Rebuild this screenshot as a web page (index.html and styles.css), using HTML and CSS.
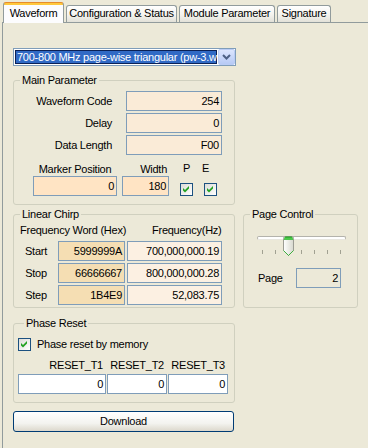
FILE: index.html
```html
<!DOCTYPE html>
<html lang="en">
<head>
    <meta charset="UTF-8">
    <title>Waveform</title>
    <link rel="stylesheet" href="styles.css">
</head>
<body>
    <!--标签页-->
    <div class="tabs">
        <div class="tab on" style="width:61px">Waveform</div>
        <div class="tab" style="width:111px">Configuration &amp; Status</div>
        <div class="tab" style="width:96px">Module Parameter</div>
        <div class="tab" style="width:54px">Signature</div>
    </div>
    <div class="panel">
        <!--波形选择-->
        <div class="combo">
            <span class="combo-text">700-800 MHz page-wise triangular (pw-3.w</span>
            <span class="combo-btn"><svg width="9" height="6" viewBox="0 0 9 6"><path d="M1 1l3.5 3.5L8 1" fill="none" stroke="#4D6185" stroke-width="2"/></svg></span>
        </div>
        <!--主参数-->
        <fieldset class="group main">
            <legend>Main Parameter</legend>
            <div class="row"><label>Waveform Code</label><span class="edit white-a w96">254</span></div>
            <div class="row"><label>Delay</label><span class="edit white-a w96">0</span></div>
            <div class="row"><label>Data Length</label><span class="edit white-a w96">F00</span></div>
            <div class="marker">
                <div class="col c-pos"><span class="cap">Marker Position</span><span class="edit bisque w84">0</span></div>
                <div class="col c-width"><span class="cap">Width</span><span class="edit bisque w47">180</span></div>
                <div class="col c-p"><span class="cap">P</span><span class="chk"><svg width="11" height="11" viewBox="0 0 11 11"><path d="M2 4l2 2 4-4v2.5l-4 4-2-2z" fill="#21A121"/></svg></span></div>
                <div class="col c-e"><span class="cap">E</span><span class="chk"><svg width="11" height="11" viewBox="0 0 11 11"><path d="M2 4l2 2 4-4v2.5l-4 4-2-2z" fill="#21A121"/></svg></span></div>
            </div>
        </fieldset>
        <div class="mid">
            <!--线性扫频-->
            <fieldset class="group chirp">
                <legend>Linear Chirp</legend>
                <div class="head"><span class="h1">Frequency Word (Hex)</span><span class="h2">Frequency(Hz)</span></div>
                <div class="crow"><label>Start</label><span class="edit wheat w67">5999999A</span><span class="edit linen w95">700,000,000.19</span></div>
                <div class="crow"><label>Stop</label><span class="edit wheat w67">66666667</span><span class="edit linen w95">800,000,000.28</span></div>
                <div class="crow"><label>Step</label><span class="edit wheat w67">1B4E9</span><span class="edit linen w95">52,083.75</span></div>
            </fieldset>
            <!--页面控制-->
            <fieldset class="group page">
                <legend>Page Control</legend>
                <div class="slider">
                    <div class="track"></div>
                    <div class="ticks"><i></i><i></i><i></i><i></i><i></i><i></i><i></i></div>
                    <svg class="thumb" width="11" height="20" viewBox="0 0 11 20">
                        <defs>
                            <linearGradient id="tb" x1="0" x2="1"><stop offset="0" stop-color="#FFFFFF"/><stop offset="1" stop-color="#D8D8CE"/></linearGradient>
                        </defs>
                        <path d="M0.5 2.5Q0.5 0.5 2.5 0.5H8.5Q10.5 0.5 10.5 2.5V14.5L5.5 19.5L0.5 14.5Z" fill="url(#tb)" stroke="#9C9C94"/>
                        <path d="M1 2.5Q1 1 2.5 1H8.5Q10 1 10 2.5V4H1Z" fill="#4CC84C"/>
                        <path d="M2 1H9" stroke="#1E9E1E"/>
                        <path d="M0.5 14.5L5.5 19.5L10.5 14.5" fill="none" stroke="#3DAF3D"/>
                    </svg>
                </div>
                <div class="prow"><label>Page</label><span class="edit beige w45">2</span></div>
            </fieldset>
        </div>
        <!--相位复位-->
        <fieldset class="group reset">
            <legend>Phase Reset</legend>
            <div class="check-row"><span class="chk"><svg width="11" height="11" viewBox="0 0 11 11"><path d="M2 4l2 2 4-4v2.5l-4 4-2-2z" fill="#21A121"/></svg></span><span>Phase reset by memory</span></div>
            <div class="rgrid">
                <span class="rcap">RESET_T1</span><span class="rcap">RESET_T2</span><span class="rcap">RESET_T3</span>
                <span class="edit white">0</span><span class="edit white">0</span><span class="edit white">0</span>
            </div>
        </fieldset>
        <div class="btn">Download</div>
    </div>
</body>
</html>
```

FILE: styles.css
```css
/**整体**/
body{
    margin: 0;
    height: 448px;
    overflow: hidden;
    background-color: #ECE9D8;
    font: 11px/13px "Liberation Sans", Arial, sans-serif;
    letter-spacing: -0.25px;
    color: #000;
}
/**标签页**/
.tabs{
    display: flex;
    align-items: flex-end;
    gap: 2px;
    height: 22px;
    padding-left: 3px;
    box-sizing: border-box;
}
.tab{
    box-sizing: border-box;
    height: 17px;
    border: 1px solid #919B9C;
    border-bottom: none;
    border-radius: 3px 3px 0 0;
    background: linear-gradient(#FFFFFF, #F4F3EE 55%, #E2E1D8);
    line-height: 14px;
    text-align: center;
    white-space: nowrap;
}
.tab.on{
    position: relative;
    z-index: 1;
    height: 21px;
    margin-bottom: -1px;
    border-top-color: #E68B2C;
    background: linear-gradient(#FFC83C 0 2px, #FCFCFE 2px);
    line-height: 20px;
}
.panel{
    box-sizing: border-box;
    height: 426px;
    margin-left: 2px;
    border-left: 1px solid #919B9C;
    border-top: 1px solid #919B9C;
    padding: 25px 0 0 10px;
}
/**下拉框**/
.combo{
    display: flex;
    box-sizing: border-box;
    width: 223px;
    height: 18px;
    border: 1px solid #7F9DB9;
    background-color: #fff;
    padding-left: 1px;
}
.combo-text{
    flex: 1;
    margin: 1px 1px 1px 0;
    background-color: #316AC5;
    color: #fff;
    box-shadow: inset 0 0 0 1px #0B2155;
    padding-left: 2px;
    line-height: 14px;
    white-space: nowrap;
    overflow: hidden;
}
.combo-btn{
    display: flex;
    align-items: center;
    justify-content: center;
    box-sizing: border-box;
    width: 17px;
    border: 1px solid #BACCF5;
    border-radius: 2px;
    background: linear-gradient(#DCE6FE, #B7CAF5);
}
/**分组框**/
.group{
    box-sizing: border-box;
    width: 222px;
    min-width: 0;
    margin: 0;
    padding: 0;
    border: 1px solid #D0D0BF;
    border-radius: 3px;
}
.group legend{
    margin-left: 6px;
    padding: 0 2px;
    line-height: 13px;
}
.edit{
    display: block;
    box-sizing: border-box;
    height: 20px;
    border: 1px solid #7F9DB9;
    padding-right: 2px;
    line-height: 18px;
    text-align: right;
    white-space: nowrap;
}
.white{ background-color: #fff; }
.white-a{ background-color: #FAEBD7; }
.bisque{ background-color: #FFE4C4; }
.wheat{ background-color: #F5DEB3; }
.linen{ background-color: #FCF0E2; }
.beige{ background-color: #ECE9D8; }
.w96{ width: 96px; }
.w84{ width: 84px; }
.w47{ width: 47px; }
.w67{ width: 67px; }
.w95{ width: 95px; }
.w45{ width: 45px; }
.chk{
    display: flex;
    align-items: center;
    justify-content: center;
    box-sizing: border-box;
    width: 13px;
    height: 13px;
    border: 1px solid #1C5180;
    background: linear-gradient(135deg, #DCDCD7, #FFFFFF);
}
/**主参数**/
.main{
    margin-top: 8px;
    padding: 4px 0 8px;
}
.row{
    display: flex;
    align-items: center;
    height: 20px;
    margin-bottom: 2px;
}
.row label{
    width: 98px;
    margin-right: 14px;
    text-align: right;
}
.marker{
    display: flex;
    align-items: flex-end;
    margin-top: 7px;
    padding-left: 19px;
}
.col{
    display: flex;
    flex-direction: column;
}
.cap{
    height: 13px;
    white-space: nowrap;
}
.c-pos .cap{ text-align: center; }
.c-width{ margin-left: 5px; }
.c-width .cap{ text-align: right; padding-right: 2px; }
.c-p{ margin-left: 11px; }
.c-p .cap{ text-align: center; margin-bottom: 8px; }
.c-e{ margin-left: 11px; }
.c-e .cap{ margin-left: -2px; margin-bottom: 8px; }
/**中间一排**/
.mid{
    display: flex;
    align-items: stretch;
    gap: 8px;
    margin-top: 3px;
}
.chirp{
    padding: 3px 0 2px;
}
.head{
    display: flex;
    height: 13px;
    margin-bottom: 4px;
}
.head .h1{
    width: 107px;
    padding-left: 6px;
    white-space: nowrap;
}
.head .h2{
    flex: 1;
    padding-left: 25px;
    white-space: nowrap;
}
.crow{
    display: flex;
    align-items: center;
    height: 20px;
    margin-bottom: 2px;
}
.crow:last-child{
    margin-bottom: 0;
}
.crow label{
    width: 44px;
    text-align: center;
}
.crow .linen{
    margin-left: 2px;
}
.page{
    width: 115px;
    padding: 0;
}
.slider{
    position: relative;
    width: 89px;
    height: 26px;
    margin: 15px 0 0 13px;
}
.track{
    box-sizing: border-box;
    height: 4px;
    margin-top: 8px;
    border: 1px solid #B4B3AC;
    border-bottom-color: #E8E7E0;
    border-radius: 2px;
    background-color: #fff;
}
.ticks{
    display: flex;
    justify-content: space-between;
    margin-top: 10px;
    padding: 0 5px;
}
.ticks i{
    width: 1px;
    height: 4px;
    background-color: #A1A192;
}
.thumb{
    position: absolute;
    left: 26px;
    top: 0;
}
.prow{
    display: flex;
    align-items: center;
    margin-top: 6px;
    padding-left: 14px;
}
.prow label{
    width: 38px;
}
/**相位复位**/
.reset{
    margin-top: 9px;
    padding: 8px 0 8px 4px;
}
.check-row{
    display: flex;
    align-items: center;
    gap: 6px;
    height: 13px;
}
.rgrid{
    display: grid;
    grid-template-columns: 88px 60px 60px;
    column-gap: 1px;
    row-gap: 2px;
    margin-top: 8px;
}
.rcap{
    padding-right: 3px;
    text-align: right;
}
/**下载按钮**/
.btn{
    box-sizing: border-box;
    width: 221px;
    height: 21px;
    margin-top: 8px;
    border: 1px solid #003C74;
    border-radius: 3px;
    background: linear-gradient(#FFFFFF, #F3F3EF 60%, #DCD8CC);
    line-height: 19px;
    text-align: center;
}
```
